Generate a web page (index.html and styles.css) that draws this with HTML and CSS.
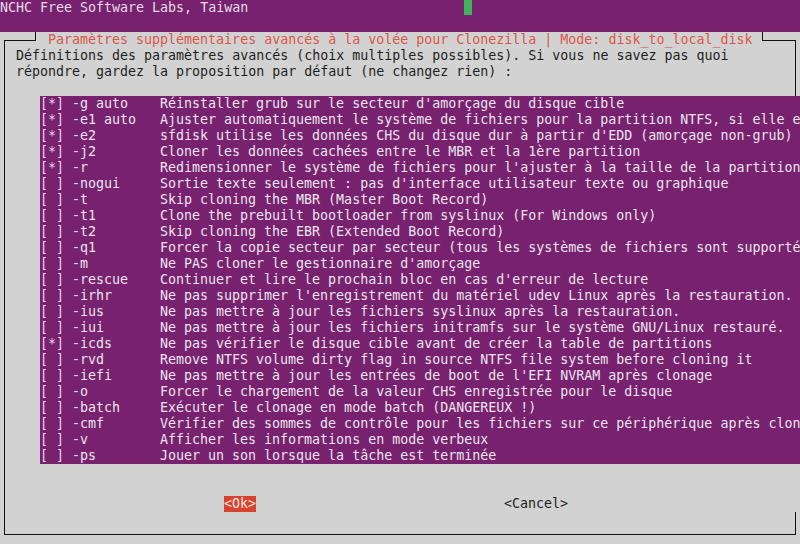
FILE: index.html
```html
<!DOCTYPE html>
<html lang="fr">

<head>
    <meta charset="UTF-8">
    <meta name="viewport" content="width=device-width, initial-scale=1.0">
    <title>Clonezilla</title>
    <link rel="stylesheet" href="styles.css">
</head>

<body>
    <div class="topbar">
        <span class="brand">NCHC Free Software Labs, Taiwan</span>
        <span class="cursor"></span>
    </div>

    <div class="dialog">
        <div class="frame">
            <div class="title-row">
                <span class="rule-left"></span>
                <span class="title">Paramètres supplémentaires avancés à la volée pour Clonezilla | Mode: disk_to_local_disk</span>
                <span class="rule-right"></span>
            </div>

            <div class="intro">
                <div class="line">Définitions des paramètres avancés (choix multiples possibles). Si vous ne savez pas quoi</div>
                <div class="line">répondre, gardez la proposition par défaut (ne changez rien) :</div>
            </div>

            <div class="list">
                <div class="item"><span class="mark">[*]</span><span class="opt">-g auto</span><span class="desc">Réinstaller grub sur le secteur d'amorçage du disque cible</span></div>
                <div class="item"><span class="mark">[*]</span><span class="opt">-e1 auto</span><span class="desc">Ajuster automatiquement le système de fichiers pour la partition NTFS, si elle existe</span></div>
                <div class="item"><span class="mark">[*]</span><span class="opt">-e2</span><span class="desc">sfdisk utilise les données CHS du disque dur à partir d'EDD (amorçage non-grub)</span></div>
                <div class="item"><span class="mark">[*]</span><span class="opt">-j2</span><span class="desc">Cloner les données cachées entre le MBR et la 1ère partition</span></div>
                <div class="item"><span class="mark">[*]</span><span class="opt">-r</span><span class="desc">Redimensionner le système de fichiers pour l'ajuster à la taille de la partition cible</span></div>
                <div class="item"><span class="mark">[ ]</span><span class="opt">-nogui</span><span class="desc">Sortie texte seulement : pas d'interface utilisateur texte ou graphique</span></div>
                <div class="item"><span class="mark">[ ]</span><span class="opt">-t</span><span class="desc">Skip cloning the MBR (Master Boot Record)</span></div>
                <div class="item"><span class="mark">[ ]</span><span class="opt">-t1</span><span class="desc">Clone the prebuilt bootloader from syslinux (For Windows only)</span></div>
                <div class="item"><span class="mark">[ ]</span><span class="opt">-t2</span><span class="desc">Skip cloning the EBR (Extended Boot Record)</span></div>
                <div class="item"><span class="mark">[ ]</span><span class="opt">-q1</span><span class="desc">Forcer la copie secteur par secteur (tous les systèmes de fichiers sont supportés)</span></div>
                <div class="item"><span class="mark">[ ]</span><span class="opt">-m</span><span class="desc">Ne PAS cloner le gestionnaire d'amorçage</span></div>
                <div class="item"><span class="mark">[ ]</span><span class="opt">-rescue</span><span class="desc">Continuer et lire le prochain bloc en cas d'erreur de lecture</span></div>
                <div class="item"><span class="mark">[ ]</span><span class="opt">-irhr</span><span class="desc">Ne pas supprimer l'enregistrement du matériel udev Linux après la restauration.</span></div>
                <div class="item"><span class="mark">[ ]</span><span class="opt">-ius</span><span class="desc">Ne pas mettre à jour les fichiers syslinux après la restauration.</span></div>
                <div class="item"><span class="mark">[ ]</span><span class="opt">-iui</span><span class="desc">Ne pas mettre à jour les fichiers initramfs sur le système GNU/Linux restauré.</span></div>
                <div class="item"><span class="mark">[*]</span><span class="opt">-icds</span><span class="desc">Ne pas vérifier le disque cible avant de créer la table de partitions</span></div>
                <div class="item"><span class="mark">[ ]</span><span class="opt">-rvd</span><span class="desc">Remove NTFS volume dirty flag in source NTFS file system before cloning it</span></div>
                <div class="item"><span class="mark">[ ]</span><span class="opt">-iefi</span><span class="desc">Ne pas mettre à jour les entrées de boot de l'EFI NVRAM après clonage</span></div>
                <div class="item"><span class="mark">[ ]</span><span class="opt">-o</span><span class="desc">Forcer le chargement de la valeur CHS enregistrée pour le disque</span></div>
                <div class="item"><span class="mark">[ ]</span><span class="opt">-batch</span><span class="desc">Exécuter le clonage en mode batch (DANGEREUX !)</span></div>
                <div class="item"><span class="mark">[ ]</span><span class="opt">-cmf</span><span class="desc">Vérifier des sommes de contrôle pour les fichiers sur ce périphérique après clonage</span></div>
                <div class="item"><span class="mark">[ ]</span><span class="opt">-v</span><span class="desc">Afficher les informations en mode verbeux</span></div>
                <div class="item"><span class="mark">[ ]</span><span class="opt">-ps</span><span class="desc">Jouer un son lorsque la tâche est terminée</span></div>
            </div>

            <div class="spacer"></div>

            <div class="buttons">
                <span class="button button-ok">&lt;Ok&gt;</span>
                <span class="button button-cancel">&lt;Cancel&gt;</span>
            </div>
        </div>
    </div>
</body>

</html>
```

FILE: styles.css
```css
body {
    margin: 0;
    padding: 0;
    width: 800px;
    height: 544px;
    overflow: hidden;
    background-color: #d2d2d2;
    font-family: "DejaVu Sans Mono", "Liberation Mono", monospace;
    font-size: 13.3px;
    line-height: 16px;
    color: #1e1e1e;
}

.topbar {
    display: flex;
    height: 32px;
    background-color: #77216f;
    color: #e6dde6;
    white-space: nowrap;
}

.brand {
    width: 464px;
    height: 16px;
}

.cursor {
    width: 8px;
    height: 15px;
    background-color: #3fb25a;
}

.dialog {
    height: 512px;
    padding: 8px 4px 0 4px;
    box-sizing: border-box;
}

.frame {
    border-left: 1px solid #111;
    border-right: 1px solid #111;
    border-bottom: 1px solid #111;
    padding-bottom: 22px;
    display: flex;
    flex-direction: column;
}

.title-row {
    display: flex;
    height: 16px;
    margin-top: -8px;
    white-space: nowrap;
}

.rule-left {
    flex: none;
    width: 30px;
    height: 8px;
    border-bottom: 1px solid #111;
    border-right: 1px solid #111;
}

.title {
    flex: none;
    margin-left: 12px;
    color: #d9574a;
}

.rule-right {
    flex: 1;
    height: 8px;
    margin-left: 10px;
    border-bottom: 1px solid #111;
    border-left: 1px solid #111;
}

.intro {
    padding-left: 11px;
    height: 48px;
}

.line {
    height: 16px;
    white-space: pre;
}

.list {
    margin-left: 35px;
    margin-right: -5px;
    background-color: #77216f;
    color: #ede5ed;
    overflow: hidden;
}

.item {
    display: flex;
    height: 16px;
}

.mark,
.opt,
.desc {
    flex: none;
    white-space: pre;
}

.mark {
    width: 32px;
    color: #e9d4e9;
}

.opt {
    width: 88px;
}

.spacer {
    height: 32px;
    margin-right: -1px;
    background-color: #d2d2d2;
}

.buttons {
    display: flex;
    height: 16px;
    margin-right: -1px;
    background-color: #d2d2d2;
    white-space: nowrap;
}

.button {
    flex: none;
    text-align: center;
}

.button-ok {
    width: 32px;
    margin-left: 219px;
    background-color: #d8432f;
    color: #fbe6e2;
}

.button-cancel {
    width: 64px;
    margin-left: 248px;
    color: #1e1e1e;
}
```
